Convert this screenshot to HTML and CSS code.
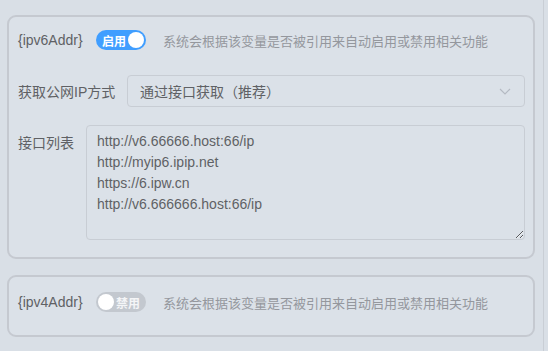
FILE: index.html
```html
<!DOCTYPE html>
<html lang="zh-CN">
<head>
    <meta charset="UTF-8">
    <meta name="viewport" content="width=device-width, initial-scale=1.0">
    <title>DDNS 设置</title>
    <link rel="stylesheet" href="styles.css">
</head>
<body>
    <div class="page">
        <section class="card">
            <div class="row row-switch">
                <span class="var-name">{ipv6Addr}</span>
                <span class="switch on">
                    <span class="switch-text">启用</span>
                    <span class="knob"></span>
                </span>
                <span class="tip">系统会根据该变量是否被引用来自动启用或禁用相关功能</span>
            </div>

            <div class="row row-select">
                <label class="label">获取公网IP方式</label>
                <div class="select">
                    <span>通过接口获取（推荐）</span>
                    <svg class="arrow" width="12" height="7" viewBox="0 0 12 7">
                        <path d="M1 1 L6 6 L11 1" fill="none" stroke="#b4b9c2" stroke-width="1.1"/>
                    </svg>
                </div>
            </div>

            <div class="row row-area">
                <label class="label">接口列表</label>
                <textarea class="area">http://v6.66666.host:66/ip
http://myip6.ipip.net
https://6.ipw.cn
http://v6.666666.host:66/ip</textarea>
            </div>
        </section>

        <section class="card card-small">
            <div class="row row-switch">
                <span class="var-name">{ipv4Addr}</span>
                <span class="switch off">
                    <span class="knob"></span>
                    <span class="switch-text">禁用</span>
                </span>
                <span class="tip">系统会根据该变量是否被引用来自动启用或禁用相关功能</span>
            </div>
        </section>
    </div>
</body>
</html>
```

FILE: styles.css
```css
html, body {
    margin: 0;
    padding: 0;
    background-color: #d9dfe6;
}
body {
    font-family: "Liberation Sans", Arial, "Noto Sans CJK SC", sans-serif;
    font-size: 14px;
    color: #606266;
    height: 351px;
    overflow: hidden;
}
.page {
    width: 544px;
    height: 351px;
    box-sizing: border-box;
    padding: 15px 8px 0 7px;
    border-right: 1px solid #c9ced5;
}
.card {
    border: 2px solid #c5c9d0;
    border-radius: 9px;
    background-color: #dbe1e8;
    padding: 12px 8px 17px 9px;
}
.card-small {
    margin-top: 16px;
    padding: 14px 8px 22px 9px;
}
.row {
    display: flex;
}
.row-switch {
    align-items: center;
    height: 22px;
}
.var-name {
    width: 78px;
    font-size: 14px;
    color: #5f6165;
}
.switch {
    display: inline-flex;
    align-items: center;
    box-sizing: border-box;
    width: 50px;
    height: 20px;
    border-radius: 10px;
    padding: 0 2px 0 6px;
    color: #fff;
    font-size: 12px;
    font-weight: bold;
}
.switch.on {
    background-color: #409eff;
    justify-content: space-between;
}
.switch.off {
    background-color: #c3c8cf;
    padding: 0 6px 0 2px;
    justify-content: space-between;
    color: #f4f5f7;
}
.knob {
    width: 16px;
    height: 16px;
    border-radius: 50%;
    background-color: #fff;
}
.tip {
    margin-left: 17px;
    font-size: 13px;
    color: #94979d;
}
.row-select {
    margin-top: 24px;
    align-items: center;
}
.label {
    color: #5f6165;
    white-space: nowrap;
}
.row-select .label {
    width: 109px;
}
.select {
    flex: 1;
    height: 32px;
    box-sizing: border-box;
    border: 1px solid #c8cdd4;
    border-radius: 4px;
    display: flex;
    align-items: center;
    justify-content: space-between;
    padding: 0 13px 0 12px;
    color: #5f6165;
}
.row-area {
    margin-top: 18px;
    align-items: flex-start;
}
.row-area .label {
    width: 68px;
    padding-top: 7px;
}
.area {
    flex: 1;
    height: 115px;
    box-sizing: border-box;
    margin: 0;
    border: 1px solid #c8cdd4;
    border-radius: 4px;
    background: transparent;
    padding: 5px 10px 4px;
    font-family: "Liberation Sans", Arial, sans-serif;
    font-size: 14px;
    line-height: 21px;
    color: #5f6165;
    resize: vertical;
    outline: none;
}
```
